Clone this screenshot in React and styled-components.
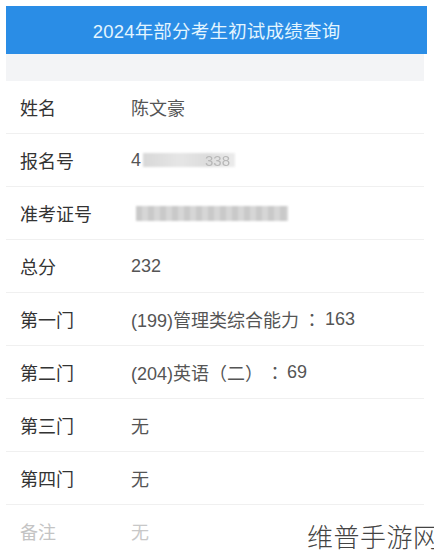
import React from "react";
import styled, { createGlobalStyle } from "styled-components";

const Global = createGlobalStyle`
  html, body { margin: 0; padding: 0; background: #fff; }
  body { font-family: "Liberation Sans", "Noto Sans CJK SC", sans-serif; }
`;

const Page = styled.div`
  position: relative;
  width: 434px;
  height: 557px;
  overflow: hidden;
  background: #fff;
  padding: 6px 7px 0 6px;
  box-sizing: border-box;
`;

const Header = styled.div`
  height: 48px;
  background: #2a8de6;
  color: #e3f5ff;
  display: flex;
  align-items: center;
  justify-content: center;
  font-size: 18.5px;
  letter-spacing: 0.2px;
`;

const Band = styled.div`
  height: 27px;
  margin-right: 3px;
  background: #f3f4f6;
`;

const List = styled.div`
  display: flex;
  flex-direction: column;
  margin-right: 3px;
`;

const Row = styled.div`
  height: 53px;
  display: flex;
  align-items: center;
  padding-left: 14px;
  box-sizing: border-box;
  border-bottom: 1px solid ${p => (p.$last ? "transparent" : "#f0f0f0")};
  font-size: 18px;
`;

const Label = styled.div`
  width: 111px;
  flex: none;
  color: ${p => (p.$muted ? "#c4c4c4" : "#333")};
`;

const Value = styled.div`
  display: flex;
  align-items: center;
  white-space: pre;
  color: ${p => (p.$muted ? "#c8c8c8" : "#555")};
`;

const Colon = styled.span`
  font-family: "Noto Sans CJK TC", sans-serif;
  margin: 0 ${p => p.$gap || 0}px;
`;

const Blur = styled.span`
  display: inline-block;
  width: ${p => p.$w}px;
  height: ${p => p.$h}px;
  background: ${p => p.$bg};
  filter: blur(1.2px);
  margin-left: ${p => p.$ml || 0}px;
`;

const Faint = styled.span`
  color: #b8b8b8;
  margin-left: -30px;
  filter: blur(0.6px);
  font-size: 15px;
`;

const Watermark = styled.div`
  position: absolute;
  left: 307px;
  top: 517px;
  font-family: "Noto Sans CJK SC", sans-serif;
  font-size: 26px;
  font-weight: 200;
  color: #444;
  white-space: nowrap;
  letter-spacing: 0.5px;
`;

const rows = [
  { l: "姓名", v: "陈文豪" },
  { l: "报名号", v: "reg" },
  { l: "准考证号", v: "exam" },
  { l: "总分", v: "232" },
  { l: "第一门", v: ["(199)管理类综合能力", "163", 4] },
  { l: "第二门", v: ["(204)英语（二）", "69", 3] },
  { l: "第三门", v: "无" },
  { l: "第四门", v: "无" },
  { l: "备注", v: "无", muted: true },
];

function renderValue(r) {
  if (Array.isArray(r.v)) {
    return (
      <>
        {r.v[0]}
        <Colon $gap={r.v[2]}>：</Colon>
        {r.v[1]}
      </>
    );
  }
  if (r.v === "reg") {
    return (
      <>
        <span>4</span>
        <Blur $w={92} $h={14} $bg="linear-gradient(90deg,#d8d8d8,#e6e6e6 40%,#dcdcdc 70%,#ececec)" $ml={2} />
        <Faint>338</Faint>
      </>
    );
  }
  if (r.v === "exam") {
    return (
      <Blur
        $w={152}
        $h={15}
        $bg="repeating-linear-gradient(90deg,#c9c9c9 0 6px,#d6d6d6 6px 12px)"
        $ml={5}
      />
    );
  }
  return r.v;
}

export default function App() {
  return (
    <>
      <Global />
      <Page>
        <Header>2024年部分考生初试成绩查询</Header>
        <Band />
        <List>
          {rows.map((r, i) => (
            <Row key={r.l} $last={i === rows.length - 1}>
              <Label $muted={r.muted}>{r.l}</Label>
              <Value $muted={r.muted}>{renderValue(r)}</Value>
            </Row>
          ))}
        </List>
        <Watermark>维普手游网</Watermark>
      </Page>
    </>
  );
}
